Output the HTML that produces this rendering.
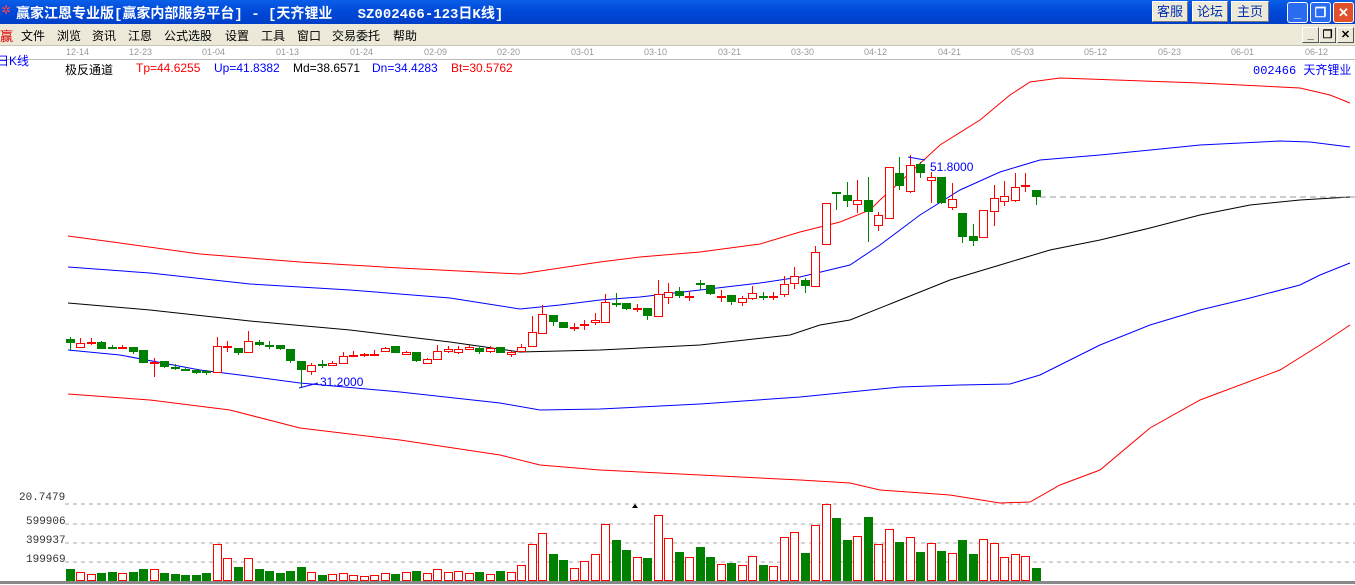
<!DOCTYPE html>
<html><head><meta charset="utf-8"><style>
*{margin:0;padding:0;box-sizing:border-box}
body{width:1355px;height:585px;overflow:hidden;background:#fff;font-family:"Liberation Sans","Noto Sans CJK SC",sans-serif;position:relative}
#title{position:absolute;left:0;top:0;width:1355px;height:24px;background:linear-gradient(#0a5fe8,#0048d8 50%,#0040c8);}
#title .t{position:absolute;left:16px;top:3px;color:#fff;font-weight:bold;font-size:14px;font-family:"Liberation Mono","Noto Sans CJK SC",monospace;white-space:pre;letter-spacing:0}
.tb{position:absolute;top:1px;height:21px;background:#ece9d8;border:1px solid #fff;border-right-color:#777;border-bottom-color:#777;color:#0030b0;font-size:13px;text-align:center;line-height:19px}
.wb{position:absolute;top:2px;width:21px;height:21px;border:1px solid #fff;border-radius:3px;background:#2a6cf0;color:#fff;font-weight:bold;font-size:13px;text-align:center;line-height:19px}
#menu{position:absolute;left:0;top:24px;width:1355px;height:22px;background:#ece9d8;border-bottom:1px solid #c8c4b4}
#menu span{position:absolute;top:3px;font-size:12px;color:#000}
.sb{position:absolute;top:27px;width:17px;height:16px;background:#ece9d8;border:1px solid #fff;border-right-color:#555;border-bottom-color:#555;font-size:11px;font-weight:bold;text-align:center;line-height:14px}
.d{position:absolute;top:47px;font-size:9px;color:#999}
svg{position:absolute;left:0;top:0}
</style></head><body>
<div id="title"><span style="position:absolute;left:1px;top:3px;color:#f44;font-size:12px">✲</span><div class="t">赢家江恩专业版[赢家内部服务平台] - [天齐锂业   SZ002466-123日K线]</div>
<div class="tb" style="left:1152px;width:36px">客服</div>
<div class="tb" style="left:1192px;width:36px">论坛</div>
<div class="tb" style="left:1231px;width:38px">主页</div>
<div class="wb" style="left:1287px">_</div>
<div class="wb" style="left:1310px">❐</div>
<div class="wb" style="left:1333px;background:#e0502a">✕</div>
</div>
<div id="menu">
<span style="left:0;color:#d00;font-size:13px;top:2px">赢</span>
<span style="left:21px">文件</span><span style="left:57px">浏览</span><span style="left:92px">资讯</span><span style="left:128px">江恩</span><span style="left:164px">公式选股</span><span style="left:225px">设置</span><span style="left:261px">工具</span><span style="left:297px">窗口</span><span style="left:332px">交易委托</span><span style="left:393px">帮助</span>
</div>
<div class="sb" style="left:1302px">_</div><div class="sb" style="left:1319px">❐</div><div class="sb" style="left:1337px">✕</div>
<div class="d" style="left:66px">12-14</div><div class="d" style="left:129px">12-23</div><div class="d" style="left:202px">01-04</div><div class="d" style="left:276px">01-13</div><div class="d" style="left:350px">01-24</div><div class="d" style="left:424px">02-09</div><div class="d" style="left:497px">02-20</div><div class="d" style="left:571px">03-01</div><div class="d" style="left:644px">03-10</div><div class="d" style="left:718px">03-21</div><div class="d" style="left:791px">03-30</div><div class="d" style="left:864px">04-12</div><div class="d" style="left:938px">04-21</div><div class="d" style="left:1011px">05-03</div><div class="d" style="left:1084px">05-12</div><div class="d" style="left:1158px">05-23</div><div class="d" style="left:1231px">06-01</div><div class="d" style="left:1305px">06-12</div>
<div style="position:absolute;left:0;top:59px;width:1355px;height:1px;background:#bbb"></div>
<div style="position:absolute;left:-3px;top:52px;color:#00f;font-size:12px">日K线</div>
<div style="position:absolute;left:65px;top:61px;font-size:12px;white-space:nowrap"><span>极反通道</span><span style="position:absolute;left:71px;color:#f00">Tp=44.6255</span><span style="position:absolute;left:149px;color:#00f">Up=41.8382</span><span style="position:absolute;left:228px;color:#000">Md=38.6571</span><span style="position:absolute;left:307px;color:#00f">Dn=34.4283</span><span style="position:absolute;left:386px;color:#f00">Bt=30.5762</span></div>
<div style="position:absolute;left:1253px;top:61px;font-size:12px;color:#00f;font-family:'Liberation Mono','Noto Sans CJK SC',monospace">002466 天齐锂业</div>
<div style="position:absolute;left:19px;top:492px;font-size:11px;color:#333;font-family:'Liberation Mono',monospace">20.7479</div>
<div style="position:absolute;left:26px;top:516px;font-size:11px;color:#333;font-family:'Liberation Mono',monospace">599906</div>
<div style="position:absolute;left:26px;top:535px;font-size:11px;color:#333;font-family:'Liberation Mono',monospace">399937</div>
<div style="position:absolute;left:26px;top:554px;font-size:11px;color:#333;font-family:'Liberation Mono',monospace">199969</div>
<svg id="s" width="1355" height="585" xmlns="http://www.w3.org/2000/svg"></svg>
<script>
var s=document.getElementById('s'),h='';
function pl(p,c){h+='<polyline fill="none" stroke="'+c+'" stroke-width="1" points="'+p+'"/>';}
pl("68,236 120,243 200,254 300,262 400,268 520,274 560,268 600,262 640,257 700,252 760,244 800,232 840,222 870,210 880,200 900,182 940,145 980,120 1010,95 1030,82 1060,78 1200,83 1300,88 1330,95 1350,103","#f00");
pl("68,267 150,273 250,284 350,290 450,298 520,309 560,305 600,300 640,297 700,290 760,283 800,277 850,265 880,245 920,215 960,190 1000,172 1040,160 1100,155 1200,145 1280,141 1310,142 1350,147","#00f");
pl("68,303 150,310 250,321 350,330 450,342 520,352 600,350 700,345 790,335 820,325 850,320 900,300 950,280 1000,265 1050,250 1100,240 1150,228 1200,215 1250,205 1300,200 1350,197","#000");
pl("68,350 120,355 200,370 240,375 300,383 400,392 500,403 540,410 600,409 700,404 800,397 850,392 900,387 960,385 1010,384 1040,375 1100,345 1150,325 1200,310 1250,298 1300,285 1320,275 1350,263","#00f");
pl("68,394 150,400 230,410 300,428 400,440 500,455 540,465 600,470 700,475 800,480 850,483 880,490 950,495 1000,503 1030,502 1060,485 1100,470 1150,428 1200,400 1280,370 1320,345 1350,325","#f00");
h+='<line x1="1040" y1="197" x2="1355" y2="197" stroke="#999" stroke-dasharray="6,4"/>';
[504,524,543,562].forEach(function(y){h+='<line x1="65" y1="'+y+'" x2="1355" y2="'+y+'" stroke="#aaa" stroke-dasharray="4,4"/>';});
h+='<rect x="0" y="581" width="1355" height="3" fill="#888"/>';
h+='<path d="M632,508 L635,504 L638,508Z" fill="#000"/>';
var C=[['g',339,343,337,350],['r',343,347,338,348],['r',342,342,338,345],['g',342,349,341,349],['g',347,347,345,348],['r',347,347,345,348],['g',347,352,347,354],['g',350,363,350,363],['r',362,362,358,377],['g',361,367,361,368],['g',367,367,364,370],['g',369,369,367,371],['g',370,373,369,374],['g',371,373,370,375],['r',346,372,337,373],['r',346,346,341,352],['g',348,353,348,355],['r',341,352,331,353],['g',342,345,340,346],['g',345,345,341,349],['g',345,349,345,350],['g',349,361,349,363],['g',361,370,361,388],['r',365,371,363,375],['g',364,364,360,368],['r',363,365,361,366],['r',356,363,352,364],['r',355,355,351,356],['r',354,355,353,357],['r',354,354,350,355],['r',348,351,347,352],['g',346,353,346,353],['r',352,354,351,355],['g',352,361,352,362],['r',359,363,358,364],['r',351,359,345,360],['r',349,351,346,353],['r',349,352,346,354],['r',347,349,345,350],['g',348,352,347,354],['r',348,351,346,353],['g',347,353,347,353],['r',352,354,350,357],['r',347,351,344,352],['r',332,346,316,347],
['r',314,333,305,334],['g',315,322,315,326],['g',322,328,322,328],['r',327,327,323,331],['r',324,324,320,330],['r',320,322,313,325],['r',302,322,294,323],['g',303,303,293,307],['g',303,309,303,310],['r',308,308,304,312],['g',308,316,308,320],['r',294,316,280,317],['r',292,297,283,304],['g',291,296,287,298],['r',296,296,291,301],['g',283,285,280,290],['g',285,294,285,295],['r',296,296,290,302],['g',295,302,295,305],['r',298,302,296,306],['r',293,298,286,300],['g',296,296,292,300],['r',296,296,292,300],['r',284,294,276,297],['r',276,283,267,289],['g',280,286,278,293],['r',252,286,246,287],['r',203,244,203,245],['g',192,194,192,210],['g',195,201,182,207],['r',200,204,180,213],['g',200,212,177,242],['r',215,225,212,231],['r',167,218,167,219],['g',173,186,157,190],['r',165,191,155,193],['g',164,173,162,178],['r',177,180,172,203],['g',177,203,177,204],['r',199,207,183,210],['g',213,237,213,243],['g',236,241,224,246],['r',210,237,210,238],['r',198,211,185,226],['r',196,201,181,206],['r',187,200,173,202],['r',185,185,173,192],['g',190,197,190,205]];
var V=[12,9,7,8,9,8,9,12,12,8,7,6,6,8,37,23,14,23,12,10,8,10,14,9,6,7,8,6,5,6,8,7,9,10,8,12,9,10,8,9,7,10,9,
16,37,48,27,21,13,20,27,57,41,31,24,23,66,43,29,24,34,24,17,18,16,25,16,15,44,49,28,56,77,63,41,45,64,37,52,39,44,29,38,30,28,41,27,42,38,24,27,25,13];
var VC="grrggrggrgggggrrgrggggg"+"rgrrrrrrgrgrrrrrgrgr"+"rrrggrrrrggrgrrgrggrgrrgrrrgrrggrgrrgrgrgrggrrrrrg";
for(var i=0;i<C.length;i++){var c=C[i],x=Math.round(69.5+10.5*i),col=c[0]=='g'?'#008000':'#f00';
h+='<line x1="'+(x+.5)+'" y1="'+c[3]+'" x2="'+(x+.5)+'" y2="'+c[4]+'" stroke="'+col+'"/>';
if(c[2]-c[1]<2){h+='<rect x="'+(x-4)+'" y="'+c[1]+'" width="9" height="2" fill="'+col+'"/>';}
else if(c[0]=='g'){h+='<rect x="'+(x-4)+'" y="'+c[1]+'" width="9" height="'+(c[2]-c[1])+'" fill="'+col+'"/>';}
else{h+='<rect x="'+(x-3.5)+'" y="'+(c[1]+.5)+'" width="8" height="'+(c[2]-c[1])+'" fill="#fff" stroke="'+col+'"/>';}
var v=V[i]||5,vx=x-4,vc=VC[i]||c[0];
if(vc=='g')h+='<rect x="'+vx+'" y="'+(581-v)+'" width="9" height="'+v+'" fill="#008000"/>';
else h+='<rect x="'+(vx+.5)+'" y="'+(581-v+.5)+'" width="8" height="'+(v-1)+'" fill="#fff" stroke="#f00"/>';}
h+='<polyline fill="none" stroke="#00f" points="908,157 925,160"/><text x="930" y="171" font-size="12" fill="#00f" font-family="Liberation Sans">51.8000</text>';
h+='<polyline fill="none" stroke="#00f" points="299,388 318,383"/><text x="320" y="386" font-size="12" fill="#00f" font-family="Liberation Sans">31.2000</text>';
s.innerHTML=h;
</script>
</body></html>
